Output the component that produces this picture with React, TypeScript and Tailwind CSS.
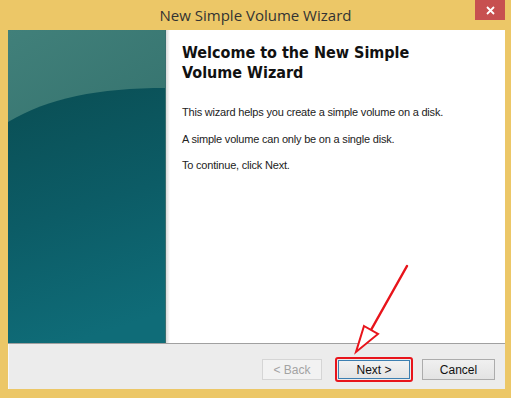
import React from "react";

function LeftPanel() {
  return (
    <svg width="158" height="313" viewBox="0 0 158 313" className="block">
      <defs>
        <linearGradient id="top" x1="0" y1="0" x2="0.3" y2="1">
          <stop offset="0" stopColor="#41807a" />
          <stop offset="1" stopColor="#2c6966" />
        </linearGradient>
        <linearGradient id="bot" x1="0.2" y1="0" x2="0.4" y2="1">
          <stop offset="0" stopColor="#0a4f55" />
          <stop offset="0.5" stopColor="#0c5c66" />
          <stop offset="1" stopColor="#0f6c78" />
        </linearGradient>
      </defs>
      <rect width="158" height="313" fill="url(#top)" />
      <path d="M0 92 C 40 68, 90 58, 158 58 L158 313 L0 313 Z" fill="url(#bot)" />
      <rect x="157" width="1" height="313" fill="#3a6f6e" />
    </svg>
  );
}

export default function App() {
  return (
    <div
      className="relative w-[511px] h-[398px] bg-[#ecc767] flex flex-col overflow-hidden"
      style={{ fontFamily: '"Liberation Sans", Arial, sans-serif' }}
    >
      <div className="relative h-[30px] flex items-center justify-center">
        <span
          className="text-[15px] text-[#333333] pt-[1px]"
          style={{ fontFamily: '"Open Sans", "Noto Sans", sans-serif' }}
        >
          New Simple Volume Wizard
        </span>
        <div className="absolute right-[6px] top-0 w-[30px] h-[20px] bg-[#c75050] flex items-center justify-center">
          <svg width="9" height="9" viewBox="0 0 9 9">
            <path d="M1 1 L8 8 M8 1 L1 8" stroke="#ffffff" strokeWidth="1.8" />
          </svg>
        </div>
      </div>
      <div className="ml-[8px] mr-[6px] mb-[9px] flex-1 flex flex-col">
        <div className="h-[313px] flex">
          <LeftPanel />
          <div className="flex-1 bg-white relative pl-[16px] pt-[13px]">
            <div className="absolute left-0 top-0 bottom-0 w-[4px] bg-gradient-to-r from-[#d8d8d8] to-white" />
            <div
              className="text-[16px] leading-[20px] font-bold text-[#111111]"
              style={{ fontFamily: '"DejaVu Sans Condensed", "DejaVu Sans", Verdana, sans-serif', fontStretch: "condensed" }}
            >
              Welcome to the New Simple
              <br />
              Volume Wizard
            </div>
            <div className="text-[11px] tracking-[-0.2px] text-[#222222] leading-[14px] mt-[22px]">
              This wizard helps you create a simple volume on a disk.
            </div>
            <div className="text-[11px] tracking-[-0.2px] text-[#222222] leading-[14px] mt-[13px]">
              A simple volume can only be on a single disk.
            </div>
            <div className="text-[11px] tracking-[-0.2px] text-[#222222] leading-[14px] mt-[12px]">
              To continue, click Next.
            </div>
          </div>
        </div>
        <div className="h-[1px] bg-[#a0a0a0]" />
        <div className="flex-1 bg-[#ececec] border-l border-[#f8f8f8] flex items-start pt-[15px] pl-[253px]">
          <div className="w-[60px] h-[21px] border border-[#d5d5d5] bg-[#f2f2f2] flex items-center justify-center text-[12px] text-[#a3a3a3]">
            &lt; Back
          </div>
          <div className="ml-[13px] -mt-[2px] w-[78px] h-[25px] border-2 border-[#e8141b] rounded-[3px] p-[1px] flex">
            <div className="flex-1 border border-[#3c7fb1] bg-gradient-to-b from-[#f2f2f2] to-[#e4e4e4] flex items-center justify-center text-[12px] text-[#111111]">
              Next &gt;
            </div>
          </div>
          <div className="ml-[9px] w-[73px] h-[21px] border border-[#acacac] bg-gradient-to-b from-[#f0f0f0] to-[#e3e3e3] flex items-center justify-center text-[12px] text-[#111111]">
            Cancel
          </div>
        </div>
      </div>
      <svg
        className="absolute left-0 top-0 pointer-events-none"
        width="511"
        height="398"
        viewBox="0 0 511 398"
      >
        <path d="M407 266 L371 330" stroke="#e8141b" strokeWidth="2.5" strokeLinecap="round" />
        <path d="M364 326 L378 334 L356 352 Z" fill="#ffffff" stroke="#e8141b" strokeWidth="2" strokeLinejoin="miter" />
      </svg>
    </div>
  );
}
